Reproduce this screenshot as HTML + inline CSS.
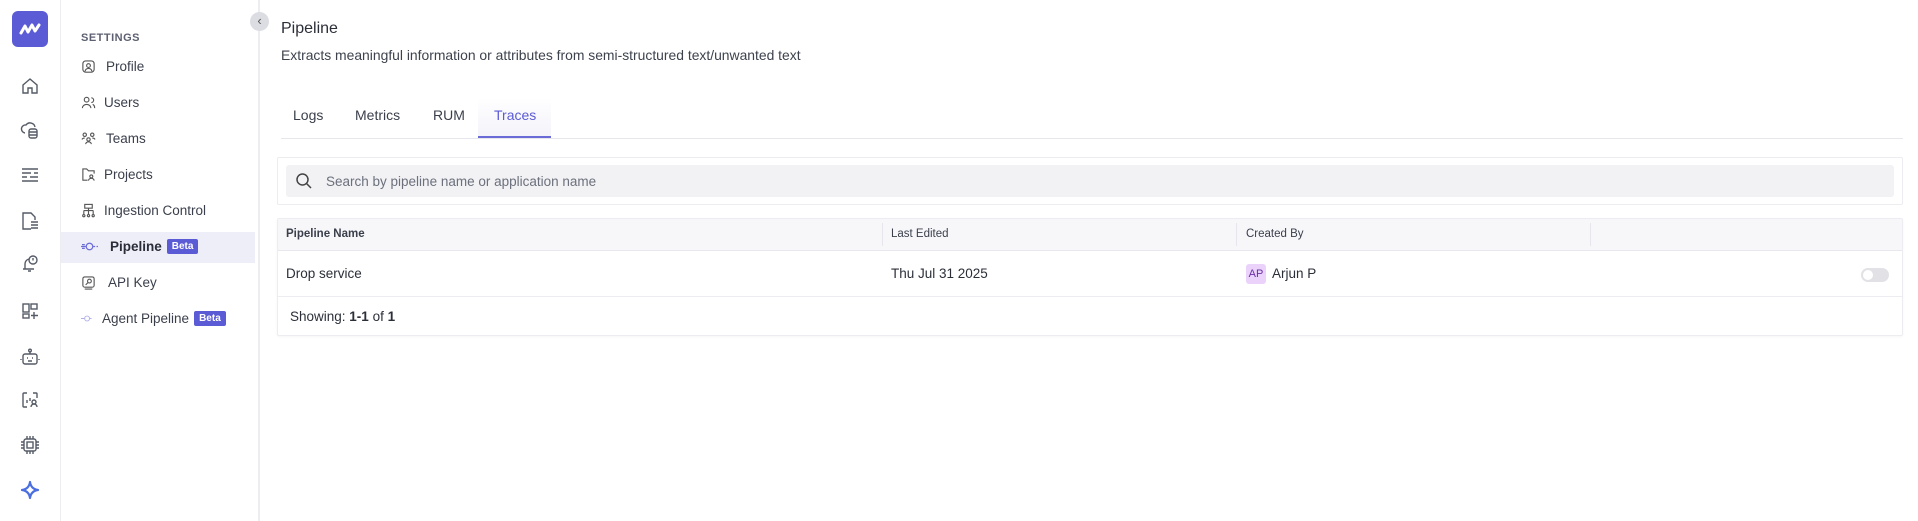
<!DOCTYPE html>
<html><head><meta charset="utf-8"><style>
*{box-sizing:border-box;margin:0;padding:0}
body{width:1918px;height:521px;background:#fff;font-family:"Liberation Sans",sans-serif;color:#2b2f38;position:relative;overflow:hidden}
.rail{position:absolute;left:0;top:0;width:61px;height:521px;border-right:1px solid #ececf1;background:#fff}
.logo{position:absolute;left:12px;top:11px;width:36px;height:36px;border-radius:6px;background:#5b5bd6}
.ri{position:absolute;left:20px;width:20px;height:20px}
.panel{position:absolute;left:61px;top:0;width:199px;height:521px;border-right:2px solid #ececf1}
.sec{position:absolute;left:20px;top:32px;font-size:11px;font-weight:bold;color:#5c6070;letter-spacing:.5px}
.it{position:absolute;left:20px;font-size:13.5px;color:#3a3f4b;display:flex;align-items:center;gap:8px}
.it svg{width:15px;height:15px}
.beta{background:#5b5bd6;color:#fff;font-size:10px;padding:2px 5px;border-radius:2px;font-weight:bold}
.sel{position:absolute;left:0;top:232px;width:194px;height:31px;background:#eeeef8}
.col{position:absolute;left:189px;top:12px;width:19px;height:19px;border-radius:50%;background:#dcdde2;font-size:13px;text-align:center;line-height:17px;color:#555;z-index:2}
.abs{position:absolute}
</style></head><body>
<div class="rail">
<div class="logo"><svg width="36" height="36" viewBox="0 0 36 36"><path d="M9 22 L13 15 L16 21 L20 14 L23 20 L27 14" stroke="#fff" stroke-width="3" fill="none" stroke-linecap="round" stroke-linejoin="round"/></svg></div>
<svg class="ri" style="top:76px" viewBox="0 0 20 20" fill="none" stroke="#555b66" stroke-width="1.4"><path d="M3 9 L10 3 L17 9 V17 H12 V12 H8 V17 H3 Z"/></svg>
<svg class="ri" style="top:120px" viewBox="0 0 20 20" fill="none" stroke="#555b66" stroke-width="1.4"><path d="M5 13 A4 4 0 0 1 6 5 A5 5 0 0 1 15 7"/><rect x="9" y="9" width="8" height="9" rx="2"/><path d="M9 12 H17 M9 15 H17"/></svg>
<svg class="ri" style="top:165px" viewBox="0 0 20 20" fill="none" stroke="#555b66" stroke-width="1.4"><path d="M2 4 H18 M2 8 H11 M14 8 H18 M2 12 H7 M10 12 H18 M2 16 H18"/></svg>
<svg class="ri" style="top:211px" viewBox="0 0 20 20" fill="none" stroke="#555b66" stroke-width="1.4"><path d="M11 18 H3 V2 H11 L15 6 V9"/><path d="M11 11 H18 M11 14 H18 M11 17 H18"/></svg>
<svg class="ri" style="top:254px" viewBox="0 0 20 20" fill="none" stroke="#555b66" stroke-width="1.4"><path d="M3 15 H14 M5 15 V10 A5 5 0 0 1 9 5"/><circle cx="13" cy="6" r="4"/><path d="M13 4 V6.5 M8 17 H11"/></svg>
<svg class="ri" style="top:301px" viewBox="0 0 20 20" fill="none" stroke="#555b66" stroke-width="1.4"><rect x="3" y="3" width="6" height="8"/><rect x="11" y="3" width="6" height="5"/><rect x="3" y="13" width="6" height="4"/><path d="M14 11 V18 M11 14.5 H18"/></svg>
<svg class="ri" style="top:347px" viewBox="0 0 20 20" fill="none" stroke="#555b66" stroke-width="1.4"><rect x="3" y="7" width="14" height="10" rx="2"/><circle cx="10" cy="3.5" r="1.3"/><path d="M10 5 V7 M7 11 H8 M12 11 H13 M8 14 H12 M1 12 V13 M19 12 V13"/></svg>
<svg class="ri" style="top:390px" viewBox="0 0 20 20" fill="none" stroke="#555b66" stroke-width="1.4"><path d="M7 3 H4 A1 1 0 0 0 3 4 V16 A1 1 0 0 0 4 17 H7 M13 3 H16 A1 1 0 0 1 17 4 V8 M7 10 V13 M10 8 V11"/><circle cx="14" cy="12" r="2"/><path d="M11 17 A3 3 0 0 1 17 17"/></svg>
<svg class="ri" style="top:435px" viewBox="0 0 20 20" fill="none" stroke="#555b66" stroke-width="1.4"><rect x="4" y="4" width="12" height="12" rx="2"/><rect x="7" y="7" width="6" height="6"/><path d="M7 1 V4 M10 1 V4 M13 1 V4 M7 16 V19 M10 16 V19 M13 16 V19 M1 7 H4 M1 10 H4 M1 13 H4 M16 7 H19 M16 10 H19 M16 13 H19"/></svg>
<svg class="ri" style="top:480px" viewBox="0 0 20 20"><path d="M10 2 Q11 9 18 10 Q11 11 10 18 Q9 11 2 10 Q9 9 10 2Z" fill="none" stroke="#4b6fe0" stroke-width="2.2" stroke-linejoin="round"/></svg>
</div>
<div class="panel">
<div class="sel"></div>
<div class="col">‹</div>
<div class="sec">SETTINGS</div>
<div class="it" style="top:59px"><svg viewBox="0 0 16 16" fill="none" stroke="#555" stroke-width="1.2"><rect x="2" y="2" width="12" height="12" rx="3"/><circle cx="8" cy="7" r="2"/><path d="M4.5 13 A3.5 3 0 0 1 11.5 13"/></svg><span style="margin-left:2px">Profile</span></div>
<div class="it" style="top:95px"><svg viewBox="0 0 16 16" fill="none" stroke="#555" stroke-width="1.2"><circle cx="6" cy="5" r="2.5"/><path d="M1.5 14 A4.5 4 0 0 1 10.5 14 M11 3 A2.5 2.5 0 0 1 11 8 M12.5 10 A4 4 0 0 1 14.5 14"/></svg>Users</div>
<div class="it" style="top:131px"><svg viewBox="0 0 16 16" fill="none" stroke="#555" stroke-width="1.2"><circle cx="4" cy="4" r="1.8"/><circle cx="12" cy="4" r="1.8"/><circle cx="8" cy="9" r="1.8"/><path d="M5 14 A3 2.5 0 0 1 11 14 M1 9 A3 2.5 0 0 1 4 7.5 M15 9 A3 2.5 0 0 0 12 7.5"/></svg><span style="margin-left:2px">Teams</span></div>
<div class="it" style="top:167px"><svg viewBox="0 0 16 16" fill="none" stroke="#555" stroke-width="1.2"><path d="M7 14 H2 V2 H6 L8 4 H14 V7"/><circle cx="11" cy="10" r="1.6"/><path d="M8 14.5 A3 2.5 0 0 1 14 14.5"/></svg>Projects</div>
<div class="it" style="top:203px"><svg viewBox="0 0 16 16" fill="none" stroke="#555" stroke-width="1.2"><rect x="4" y="1.5" width="8" height="4"/><path d="M8 5.5 V8 M3 8 H13 M3 8 V12 M8 8 V12 M13 8 V12"/><circle cx="3" cy="13.5" r="1.2"/><circle cx="8" cy="13.5" r="1.2"/><circle cx="13" cy="13.5" r="1.2"/></svg>Ingestion Control</div>
<div class="it" style="top:239px;font-weight:bold;color:#2a2d38"><svg viewBox="0 0 18 16" fill="none" stroke="#6b6bd8" stroke-width="1.3" style="width:17px"><path d="M0 8 H5 M1 6 H4 M1 10 H4 M13 8 H15 M16.5 8 H18"/><circle cx="9" cy="8" r="3.5"/></svg><span style="margin-left:4px">Pipeline</span><span class="beta" style="margin-left:-3px">Beta</span></div>
<div class="it" style="top:275px"><svg viewBox="0 0 16 16" fill="none" stroke="#555" stroke-width="1.2"><rect x="2" y="2" width="12" height="11" rx="2"/><circle cx="9" cy="6.5" r="2"/><path d="M7.5 8 L5 10.5 M4 15 H12"/></svg><span style="margin-left:4px">API Key</span></div>
<div class="it" style="top:311px"><svg viewBox="0 0 16 16" fill="none" stroke="#b0b0e8" stroke-width="1.2" style="width:13px"><path d="M0 8 H4 M11 8 H13"/><circle cx="7.5" cy="8" r="3"/></svg>Agent Pipeline<span class="beta" style="margin-left:-3px">Beta</span></div>
</div>

<div class="abs" style="left:281px;top:20px;font-size:16px;color:#2b2f38">Pipeline</div>
<div class="abs" style="left:281px;top:47px;font-size:13.9px;color:#3d424d">Extracts meaningful information or attributes from semi-structured text/unwanted text</div>

<div class="abs" style="left:478px;top:98px;width:73px;height:40px;background:linear-gradient(#fff,#f3f3fa);border-bottom:2px solid #6b6bd8"></div>
<div class="abs" style="left:281px;top:138px;width:1622px;height:1px;background:#e6e7ec"></div>
<div class="abs" style="left:293px;top:107px;font-size:14px;color:#3a3f4b">Logs</div>
<div class="abs" style="left:355px;top:107px;font-size:14px;color:#3a3f4b">Metrics</div>
<div class="abs" style="left:433px;top:107px;font-size:14px;color:#3a3f4b">RUM</div>
<div class="abs" style="left:494px;top:107px;font-size:14px;color:#5b5bd6">Traces</div>

<div class="abs" style="left:277px;top:157px;width:1626px;height:48px;border:1px solid #ececf1;border-radius:2px"></div>
<div class="abs" style="left:286px;top:165px;width:1608px;height:32px;background:#f2f2f4;border-radius:3px"></div>
<svg class="abs" style="left:295px;top:172px" width="18" height="18" viewBox="0 0 18 18" fill="none" stroke="#444" stroke-width="1.5"><circle cx="7.5" cy="7.5" r="5.5"/><path d="M11.5 11.5 L16 16"/></svg>
<div class="abs" style="left:326px;top:174px;font-size:13.5px;color:#6b707c">Search by pipeline name or application name</div>

<div class="abs" style="left:277px;top:218px;width:1626px;height:118px;border:1px solid #ececf1;border-radius:2px;box-shadow:0 1px 2px rgba(0,0,0,.04)"></div>
<div class="abs" style="left:278px;top:219px;width:1624px;height:32px;background:#f7f7fa;border-bottom:1px solid #e8e8ee"></div>
<div class="abs" style="left:882px;top:223px;width:1px;height:23px;background:#e6e6ec"></div>
<div class="abs" style="left:1236px;top:223px;width:1px;height:23px;background:#e6e6ec"></div>
<div class="abs" style="left:1590px;top:223px;width:1px;height:23px;background:#e6e6ec"></div>
<div class="abs" style="left:286px;top:228px;font-size:11.5px;font-weight:bold;color:#3a3f4b">Pipeline Name</div>
<div class="abs" style="left:891px;top:228px;font-size:11.5px;color:#3a3f4b">Last Edited</div>
<div class="abs" style="left:1246px;top:228px;font-size:11.5px;color:#3a3f4b">Created By</div>
<div class="abs" style="left:278px;top:296px;width:1624px;height:1px;background:#ececf1"></div>
<div class="abs" style="left:286px;top:266px;font-size:13.5px;color:#2b2f38">Drop service</div>
<div class="abs" style="left:891px;top:266px;font-size:13.5px;color:#2b2f38">Thu Jul 31 2025</div>
<div class="abs" style="left:1246px;top:264px;width:20px;height:20px;background:#ead2fb;border-radius:3px;font-size:11px;color:#6b2fa3;text-align:center;line-height:20px">AP</div>
<div class="abs" style="left:1272px;top:266px;font-size:13.5px;color:#2b2f38">Arjun P</div>
<div class="abs" style="left:1861px;top:268px;width:28px;height:14px;border-radius:7px;background:#e2e2e6"><div style="position:absolute;left:2px;top:2px;width:10px;height:10px;border-radius:50%;background:#fff"></div></div>
<div class="abs" style="left:290px;top:309px;font-size:13.5px;color:#2b2f38">Showing: <b>1-1</b> of <b>1</b></div>
</body></html>
